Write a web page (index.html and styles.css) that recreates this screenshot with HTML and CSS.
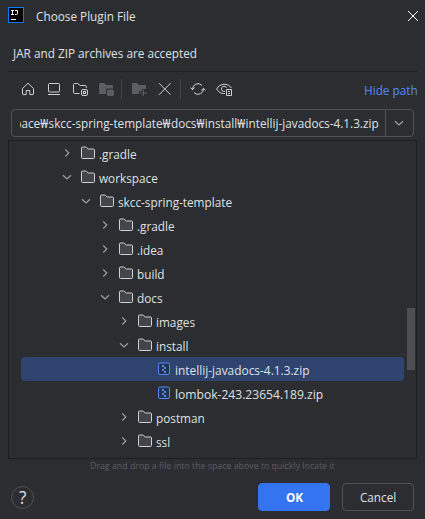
FILE: index.html
```
<!DOCTYPE html>
<html lang="en">
<head>
<meta charset="utf-8">
<title>Choose Plugin File</title>
<link rel="stylesheet" href="styles.css">
</head>
<body>
<svg class="defs" aria-hidden="true">
  <symbol id="folder" viewBox="0 0 16 16"><path d="M1.500 3c0-.6.400-1 1-1h3.200c.3 0 .5.100.7.300l1.900 1.700h5.200c.6 0 1 .4 1 1v7.500c0 .6-.4 1-1 1h-11c-.6 0-1-.4-1-1z" fill="#43454a" stroke="#ced0d6"/></symbol>
  <symbol id="right" viewBox="0 0 16 16"><path d="M6.200 4.300 9.800 8l-3.600 3.700" fill="none" stroke="#9da0a8" stroke-width="1.200"/></symbol>
  <symbol id="down" viewBox="0 0 16 16"><path d="M4 6.200 8 10l4-3.800" fill="none" stroke="#9da0a8" stroke-width="1.200"/></symbol>
  <symbol id="zip" viewBox="0 0 16 16"><rect x="2.500" y="2" width="11" height="11.500" rx="1.500" fill="#25324d" stroke="#548af7"/><path d="M6 4h2v2H6zM8 6h2v2H8zM6 8h2v2H6zM8 10h2v2H8z" fill="#548af7"/></symbol>
</svg>
<header class="titlebar">
  <svg class="logo" viewBox="0 0 16 16"><rect x=".5" y=".5" width="15" height="15" fill="#000" stroke="#087cfa"/><path d="M3 3.500h3M4.500 3.500v4M3 7.500h3M7 3.500h2.500v3q0 1-1 1H7M3 12.500h5" fill="none" stroke="#fff"/></svg>
  <h1 class="text">Choose Plugin File</h1>
  <svg class="close" viewBox="0 0 10 10"><path d="M0 0l10 10M10 0 0 10" stroke="#fff" stroke-width="1"/></svg>
</header>
<p class="subtitle"><span class="text">JAR and ZIP archives are accepted</span></p>
<nav class="toolbar">
  <svg class="ic" viewBox="0 0 16 16"><path d="M2.500 7.500 8 2.200l5.500 5.300v5.500a.6.600 0 0 1-.6.600H9.800V9.500H6.200v4.100H3.100a.6.600 0 0 1-.6-.600z"/></svg>
  <svg class="ic" viewBox="0 0 16 16"><rect x="2.500" y="2.500" width="11" height="8.500" rx="1"/><path d="M2 13.500h12"/></svg>
  <svg class="ic" viewBox="0 0 16 16"><path d="M7.500 12.500h-5c-.6 0-1-.4-1-1v-8c0-.6.400-1 1-1h3.200l2.600 2h5c.6 0 1 .4 1 1V7"/><rect x="9.500" y="8.500" width="6" height="6" rx="1.500"/><rect x="11.500" y="10.500" width="2" height="2"/></svg>
  <svg class="ic off" viewBox="0 0 16 16"><path d="M1 3c0-.6.400-1 1-1h4l2.300 2H14c.6 0 1 .4 1 1v2.500H9.500q-1.500 0-1.500 1.500v4H2c-.6 0-1-.4-1-1z"/><rect x="9" y="8.500" width="7" height="6.500" rx="1.500"/></svg>
  <i class="sep"></i>
  <svg class="ic off" viewBox="0 0 16 16"><path d="M1 3c0-.6.400-1 1-1h4l2.300 2H14c.6 0 1 .4 1 1v3h-4v2H8v3H2c-.6 0-1-.4-1-1z"/><path d="M12 9h1v2.500h3v1h-3V15h-1v-2.500H9v-1h3z"/></svg>
  <svg class="ic" viewBox="0 0 16 16"><path d="M2 2.200 13.600 13.800M13.600 2.200 2 13.800"/></svg>
  <i class="sep"></i>
  <svg class="ic" viewBox="0 0 16 16"><path d="M2.500 8.500a5.500 5.500 0 0 1 9.500-4.100M13.500 7.500a5.500 5.500 0 0 1-9.500 4.100M.5 6.600l2 2.100 2.200-2.100M11.300 9.400l2.200-2.100 2 2.100"/></svg>
  <svg class="ic" viewBox="0 0 16 16"><path d="M9 12.500C5 13 2 10.500.700 8 3.500 1.800 12.500 1.800 15.300 7"/><path d="M9 10.300A2.600 2.600 0 1 1 10.500 7"/><path d="M10.500 8.500h5v6h-5zM12 10.500h2M12 12.500h2"/></svg>
  <a class="hide"><span class="text">Hide path</span></a>
</nav>
<div class="path">
  <div class="value"><span class="text">pace<b>₩</b>skcc-spring-template<b>₩</b>docs<b>₩</b>install<b>₩</b>intellij-javadocs-4.1.3.zip</span></div>
  <div class="drop"><svg viewBox="0 0 16 16"><use href="#down"/></svg></div>
</div>
<main class="tree">
  <div class="row l0"><svg><use href="#right"/></svg><svg><use href="#folder"/></svg><span class="text">.gradle</span></div>
  <div class="row l0"><svg><use href="#down"/></svg><svg><use href="#folder"/></svg><span class="text">workspace</span></div>
  <div class="row l1"><svg><use href="#down"/></svg><svg><use href="#folder"/></svg><span class="text">skcc-spring-template</span></div>
  <div class="row l2"><svg><use href="#right"/></svg><svg><use href="#folder"/></svg><span class="text">.gradle</span></div>
  <div class="row l2"><svg><use href="#right"/></svg><svg><use href="#folder"/></svg><span class="text">.idea</span></div>
  <div class="row l2"><svg><use href="#right"/></svg><svg><use href="#folder"/></svg><span class="text">build</span></div>
  <div class="row l2"><svg><use href="#down"/></svg><svg><use href="#folder"/></svg><span class="text">docs</span></div>
  <div class="row l3"><svg><use href="#right"/></svg><svg><use href="#folder"/></svg><span class="text">images</span></div>
  <div class="row l3"><svg><use href="#down"/></svg><svg><use href="#folder"/></svg><span class="text">install</span></div>
  <div class="row l4 selected"><svg><use href="#zip"/></svg><span class="text mid">intellij-javadocs-4.1.3.zip</span></div>
  <div class="row l4"><svg><use href="#zip"/></svg><span class="text wide">lombok-243.23654.189.zip</span></div>
  <div class="row l3"><svg><use href="#right"/></svg><svg><use href="#folder"/></svg><span class="text">postman</span></div>
  <div class="row l3"><svg><use href="#right"/></svg><svg><use href="#folder"/></svg><span class="text">ssl</span></div>
  <i class="thumb"></i>
</main>
<p class="hint"><span class="text">Drag and drop a file into the space above to quickly locate it</span></p>
<footer class="actions">
  <button class="help"><span class="text">?</span></button>
  <button class="btn ok"><span class="text">OK</span></button>
  <button class="btn"><span class="text">Cancel</span></button>
</footer>
</body>
</html>
```
FILE: styles.css
```
* { box-sizing: border-box; }
body {
  margin: 0;
  width: 425px;
  height: 519px;
  overflow: hidden;
  background: #2b2d30;
  color: #dfe1e5;
  font: 13px/24px "Open Sans", "Noto Sans", sans-serif;
}
h1, p { margin: 0; font-size: 13px; font-weight: 400; }
svg { display: block; flex: none; }
.defs { position: absolute; width: 0; height: 0; }
.text {
  display: inline-block;
  white-space: nowrap;
  transform: scaleX(.905);
  transform-origin: 0 50%;
}
.text.mid { transform: scaleX(.915); }
.text.wide { transform: scaleX(.93); }

.titlebar { display: flex; align-items: center; height: 32px; padding: 0 7px 0 8px; }
.logo { width: 16px; height: 16px; margin: -2px 12px 0 0; }
.titlebar .close { width: 10px; height: 10px; margin-left: auto; }

.subtitle { height: 40px; margin: 0 8px; padding: 9px 0 0 5px; border-bottom: 1px solid #1e1f22; }

.toolbar { display: flex; align-items: center; height: 35px; padding-left: 20px; }
.ic { width: 16px; height: 16px; margin: -1px 10px 0 0; fill: none; stroke: #ced0d6; }
.ic.off { fill: #5a5d63; stroke: none; }
.sep { width: 1px; height: 20px; margin: -2px 9px 0 -3px; background: #43454a; }
.hide { width: 53px; margin: 0 8px 0 auto; color: #548af7; }

.path {
  display: flex;
  height: 28px;
  margin: 2px 11px 3px;
  border: 1px solid #4e5157;
  border-radius: 4px;
}
.value { display: flex; flex: 1; justify-content: flex-end; margin: 0 6px 0 8px; padding-top: 1px; overflow: hidden; }
.value .text { flex: none; transform: scaleX(.905); transform-origin: 100% 50%; }
.value b { font: 13px "Noto Sans", sans-serif; letter-spacing: .5px; }
.drop { width: 28px; padding: 5px; border-left: 1px solid #4e5157; }
.drop svg { width: 16px; height: 16px; }

.tree {
  position: relative;
  height: 319px;
  margin: 0 8px;
  border: 1px solid #1e1f22;
}
.row { display: flex; height: 24px; margin: 0 12px; padding-top: 1px; }
.row svg { width: 16px; height: 16px; margin-top: 4px; }
.row svg:first-child { margin-top: 3px; }
.row svg + svg { margin: 3px 3px 0 5px; }
.l0 { padding-left: 38px; }
.l1 { padding-left: 57px; }
.l2 { padding-left: 76px; }
.l3 { padding-left: 95px; }
.l4 { padding-left: 135px; }
.row.l4 svg { margin-right: 3px; }
.selected { border-radius: 4px; background: #2e436e; }
.thumb { position: absolute; top: 167px; right: 1px; width: 8px; height: 62px; background: #4d4e51; }

.hint { height: 18px; padding-left: 90px; color: #5a5d63; font-size: 9px; line-height: 14px; }
.hint .text { transform: scaleX(.978); }

.actions { display: flex; align-items: center; padding: 6px 11px 0; }
button { padding: 0; background: none; color: inherit; font: inherit; border: 1px solid #4e5157; }
.help { width: 23px; height: 23px; margin-right: auto; border-radius: 50%; font-size: 18px; line-height: 20px; }
.help .text { transform: scaleX(.95); }
.btn { width: 72px; height: 28px; border-radius: 4px; }
.btn .text { transform-origin: 50% 50%; }
.ok { margin-right: 12px; border-color: #3574f0; background: #3574f0; color: #fff; font-weight: 700; }
```
